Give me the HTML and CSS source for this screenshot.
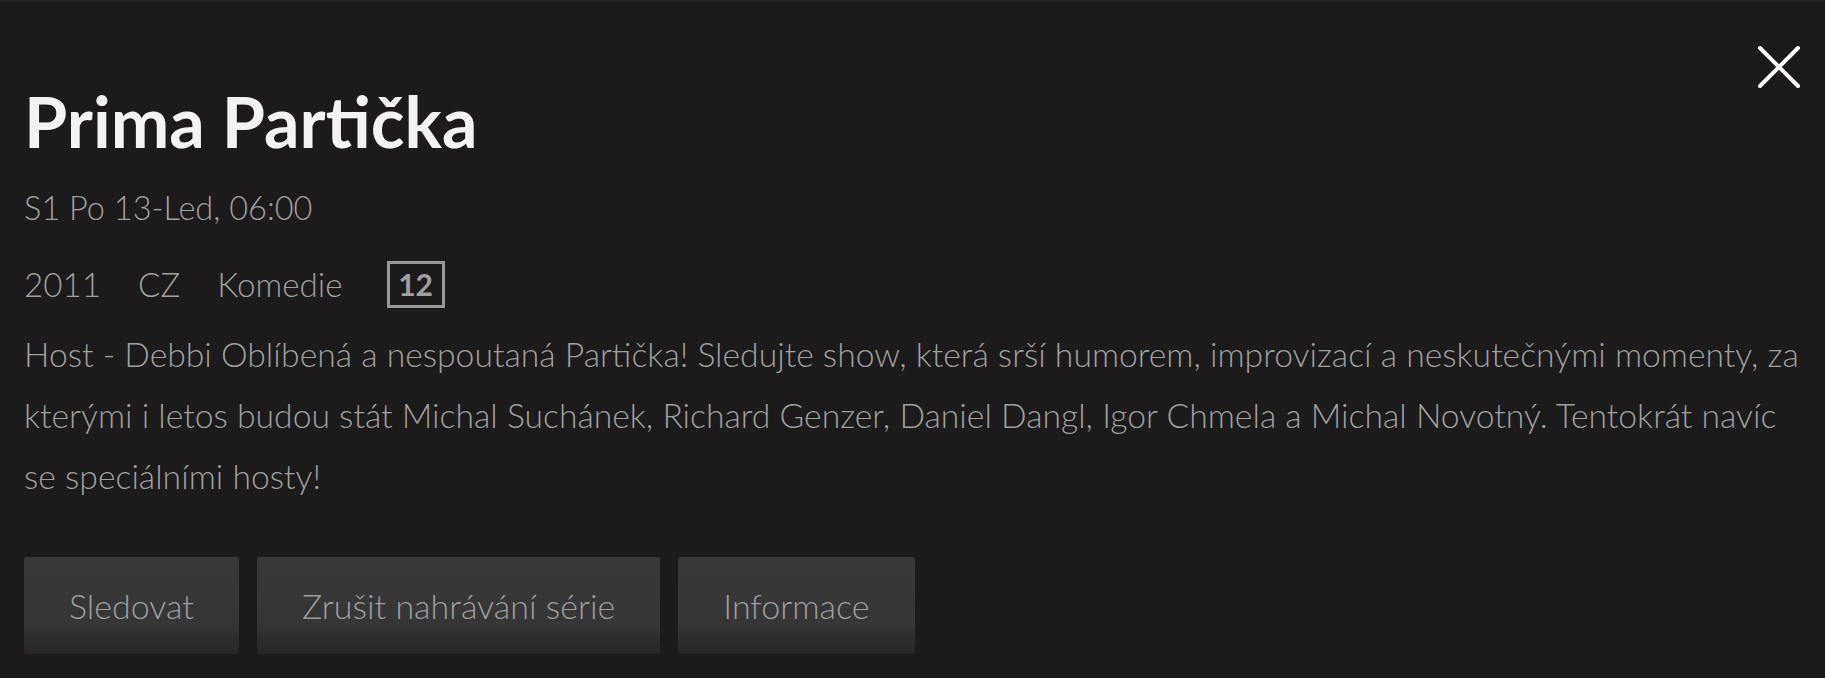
FILE: index.html
```html
<!DOCTYPE html>
<html lang="cs">
<head>
<meta charset="utf-8">
<title>Prima Partička</title>
<link rel="stylesheet" href="styles.css">
</head>
<body>
<div class="panel">
  <header class="head">
    <h1 class="title">Prima Partička</h1>
    <button class="close" aria-label="Zavřít">
      <svg width="44" height="44" viewBox="0 0 44 44"><path d="M3 3 L41 41 M41 3 L3 41" stroke="#fff" stroke-width="4" stroke-linecap="round" fill="none"/></svg>
    </button>
  </header>
  <div class="sub">S1 Po 13-Led, 06:00</div>
  <div class="meta">
    <span>2011</span>
    <span>CZ</span>
    <span>Komedie</span>
    <span class="rating">12</span>
  </div>
  <p class="desc">Host - Debbi Oblíbená a nespoutaná Partička! Sledujte show, která srší humorem, improvizací a neskutečnými momenty, za kterými i letos budou stát Michal Suchánek, Richard Genzer, Daniel Dangl, Igor Chmela a Michal Novotný. Tentokrát navíc se speciálními hosty!</p>
  <div class="actions">
    <button class="btn">Sledovat</button>
    <button class="btn">Zrušit nahrávání série</button>
    <button class="btn">Informace</button>
  </div>
</div>
</body>
</html>
```
FILE: styles.css
```css
html, body {
  margin: 0;
  padding: 0;
  background: #1c1a1b;
  height: 100%;
}
body {
  font-family: Lato, "Open Sans", sans-serif;
  color: #a0a0a0;
}
.panel {
  border-top: 2px solid #242424;
  padding: 0 20px 0 24px;
}
.head {
  display: flex;
  justify-content: space-between;
  align-items: flex-start;
  padding-right: 4px;
}
.title {
  margin: 76px 0 0 0;
  font-size: 70px;
  line-height: 86px;
  font-weight: 700;
  color: #f3f3f3;
}
.close {
  margin-top: 43px;
  padding: 0;
  border: 0;
  background: none;
  width: 44px;
  height: 44px;
  display: flex;
}
.sub {
  margin-top: 24px;
  font-size: 32.5px;
  line-height: 40px;
  font-weight: 300;
}
.meta {
  margin-top: 33px;
  display: flex;
  align-items: center;
  gap: 37px;
  font-size: 33.2px;
  line-height: 47px;
  font-weight: 300;
}
.rating {
  box-sizing: border-box;
  width: 58px;
  height: 47px;
  margin-left: 7px;
  border: 3px solid #989898;
  font-weight: 700;
  font-size: 30px;
  line-height: 41px;
  text-align: center;
  color: #a0a0a0;
}
.desc {
  margin: 16px 0 0 0;
  font-size: 33.7px;
  line-height: 61px;
  font-weight: 300;
}
.actions {
  margin-top: 50px;
  display: flex;
  gap: 18px;
}
.btn {
  height: 97px;
  padding: 0 45px;
  border: 0;
  border-radius: 3px;
  background: linear-gradient(to bottom, #383838 0%, #363636 68%, #262626 100%);
  font-family: Lato, "Open Sans", sans-serif;
  font-size: 34px;
  font-weight: 300;
  color: #9e9e9e;
}
```
